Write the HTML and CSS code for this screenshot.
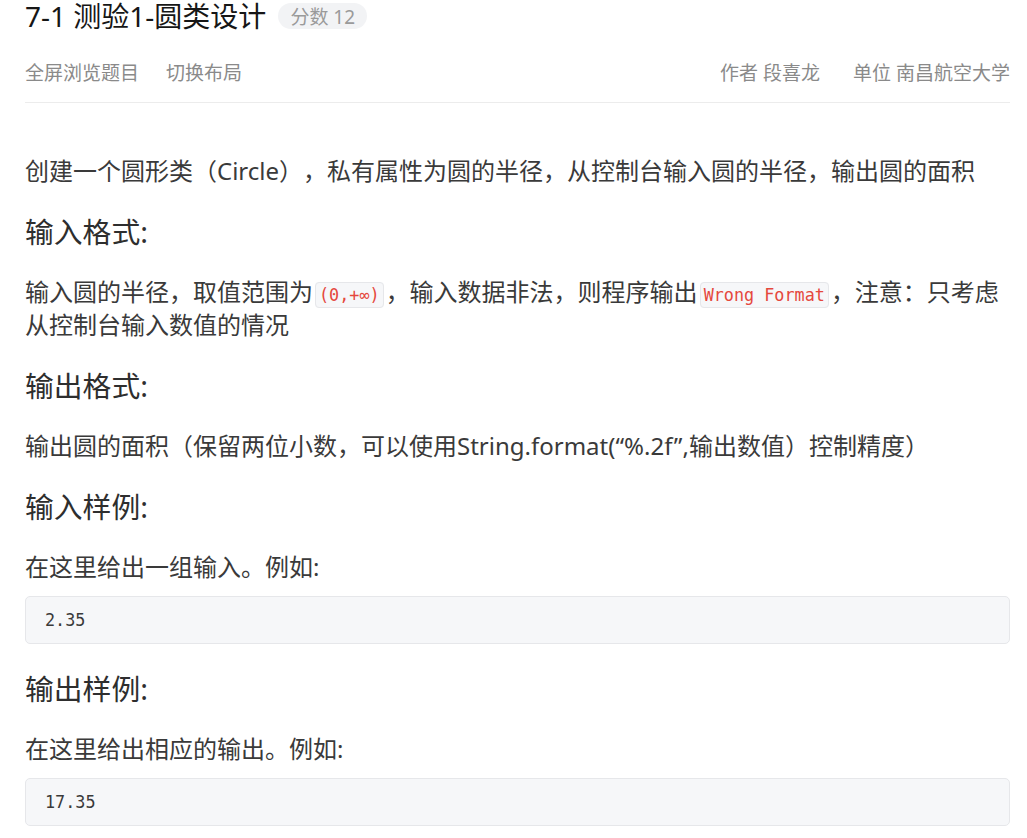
FILE: index.html
```html
<!DOCTYPE html>
<html lang="zh-CN">
<head>
<meta charset="utf-8">
<title>7-1 测验1-圆类设计</title>
<link rel="stylesheet" href="styles.css">
</head>
<body>
<div class="page">
  <header class="header">
    <div class="title-row">
      <h1 class="title">7-1 测验1-圆类设计</h1>
      <span class="badge">分数 12</span>
    </div>
    <div class="meta-row">
      <div class="meta-left">
        <span class="meta-link">全屏浏览题目</span>
        <span class="meta-link">切换布局</span>
      </div>
      <div class="meta-right">
        <span class="meta-item">作者 段喜龙</span>
        <span class="meta-item">单位 南昌航空大学</span>
      </div>
    </div>
  </header>
  <main class="content">
    <p class="text">创建一个圆形类（Circle），私有属性为圆的半径，从控制台输入圆的半径，输出圆的面积</p>
    <h2 class="heading">输入格式:</h2>
    <p class="text">输入圆的半径，取值范围为<code class="inline">(0,+∞)</code>，输入数据非法，则程序输出<code class="inline">Wrong Format</code>，注意：只考虑从控制台输入数值的情况</p>
    <h2 class="heading">输出格式:</h2>
    <p class="text">输出圆的面积（保留两位小数，可以使用String.format(“%.2f”,输出数值）控制精度）</p>
    <h2 class="heading">输入样例:</h2>
    <p class="text">在这里给出一组输入。例如:</p>
    <pre class="sample">2.35</pre>
    <h2 class="heading">输出样例:</h2>
    <p class="text">在这里给出相应的输出。例如:</p>
    <pre class="sample">17.35</pre>
  </main>
</div>
</body>
</html>
```
FILE: styles.css
```css
html, body {
  margin: 0;
  padding: 0;
  background: #ffffff;
}
body {
  font-family: "Noto Sans", "Noto Sans CJK SC", sans-serif;
  color: #3a3a3a;
  text-spacing-trim: space-all;
}
.page {
  padding: 0 17px 0 25px;
}
.header {
  border-bottom: 1px solid #ececec;
  padding-bottom: 15px;
}
.title-row {
  display: flex;
  align-items: center;
  gap: 12px;
  height: 32px;
}
.title {
  margin: 0;
  font-size: 28px;
  line-height: 32px;
  font-weight: 400;
  color: #161616;
}
.badge {
  display: inline-flex;
  align-items: center;
  height: 26px;
  padding: 0 12px;
  border-radius: 13px;
  background: #f2f3f5;
  color: #9a9a9a;
  font-size: 19px;
}
.meta-row {
  margin-top: 28px;
  display: flex;
  justify-content: space-between;
  align-items: center;
  height: 27px;
  font-size: 19px;
  line-height: 27px;
  color: #8a8a8a;
}
.meta-left {
  display: flex;
  gap: 27px;
}
.meta-right {
  display: flex;
  gap: 33px;
}
.content {
  padding-top: 51px;
}
.text {
  margin: 0 0 13px;
  font-size: 24px;
  line-height: 33px;
  color: #3a3a3a;
}
.heading {
  margin: 25px 0 23px;
  font-size: 28.8px;
  line-height: 40px;
  font-weight: 400;
  color: #2e2e2e;
}
.inline {
  font-family: "DejaVu Sans Mono", "Liberation Mono", monospace;
  font-size: 16.8px;
  line-height: 1;
  color: #e5483d;
  background: #f6f7f9;
  border: 1px solid #e6e7ea;
  border-radius: 4px;
  padding: 2px 3px;
  margin: 0 2px;
}
.sample {
  margin: 0;
  padding: 11px 19px;
  font-family: "DejaVu Sans Mono", "Liberation Mono", monospace;
  font-size: 16.8px;
  line-height: 24px;
  color: #3a3a3a;
  background: #f6f7f9;
  border: 1px solid #e6e7ea;
  border-radius: 5px;
}
```
